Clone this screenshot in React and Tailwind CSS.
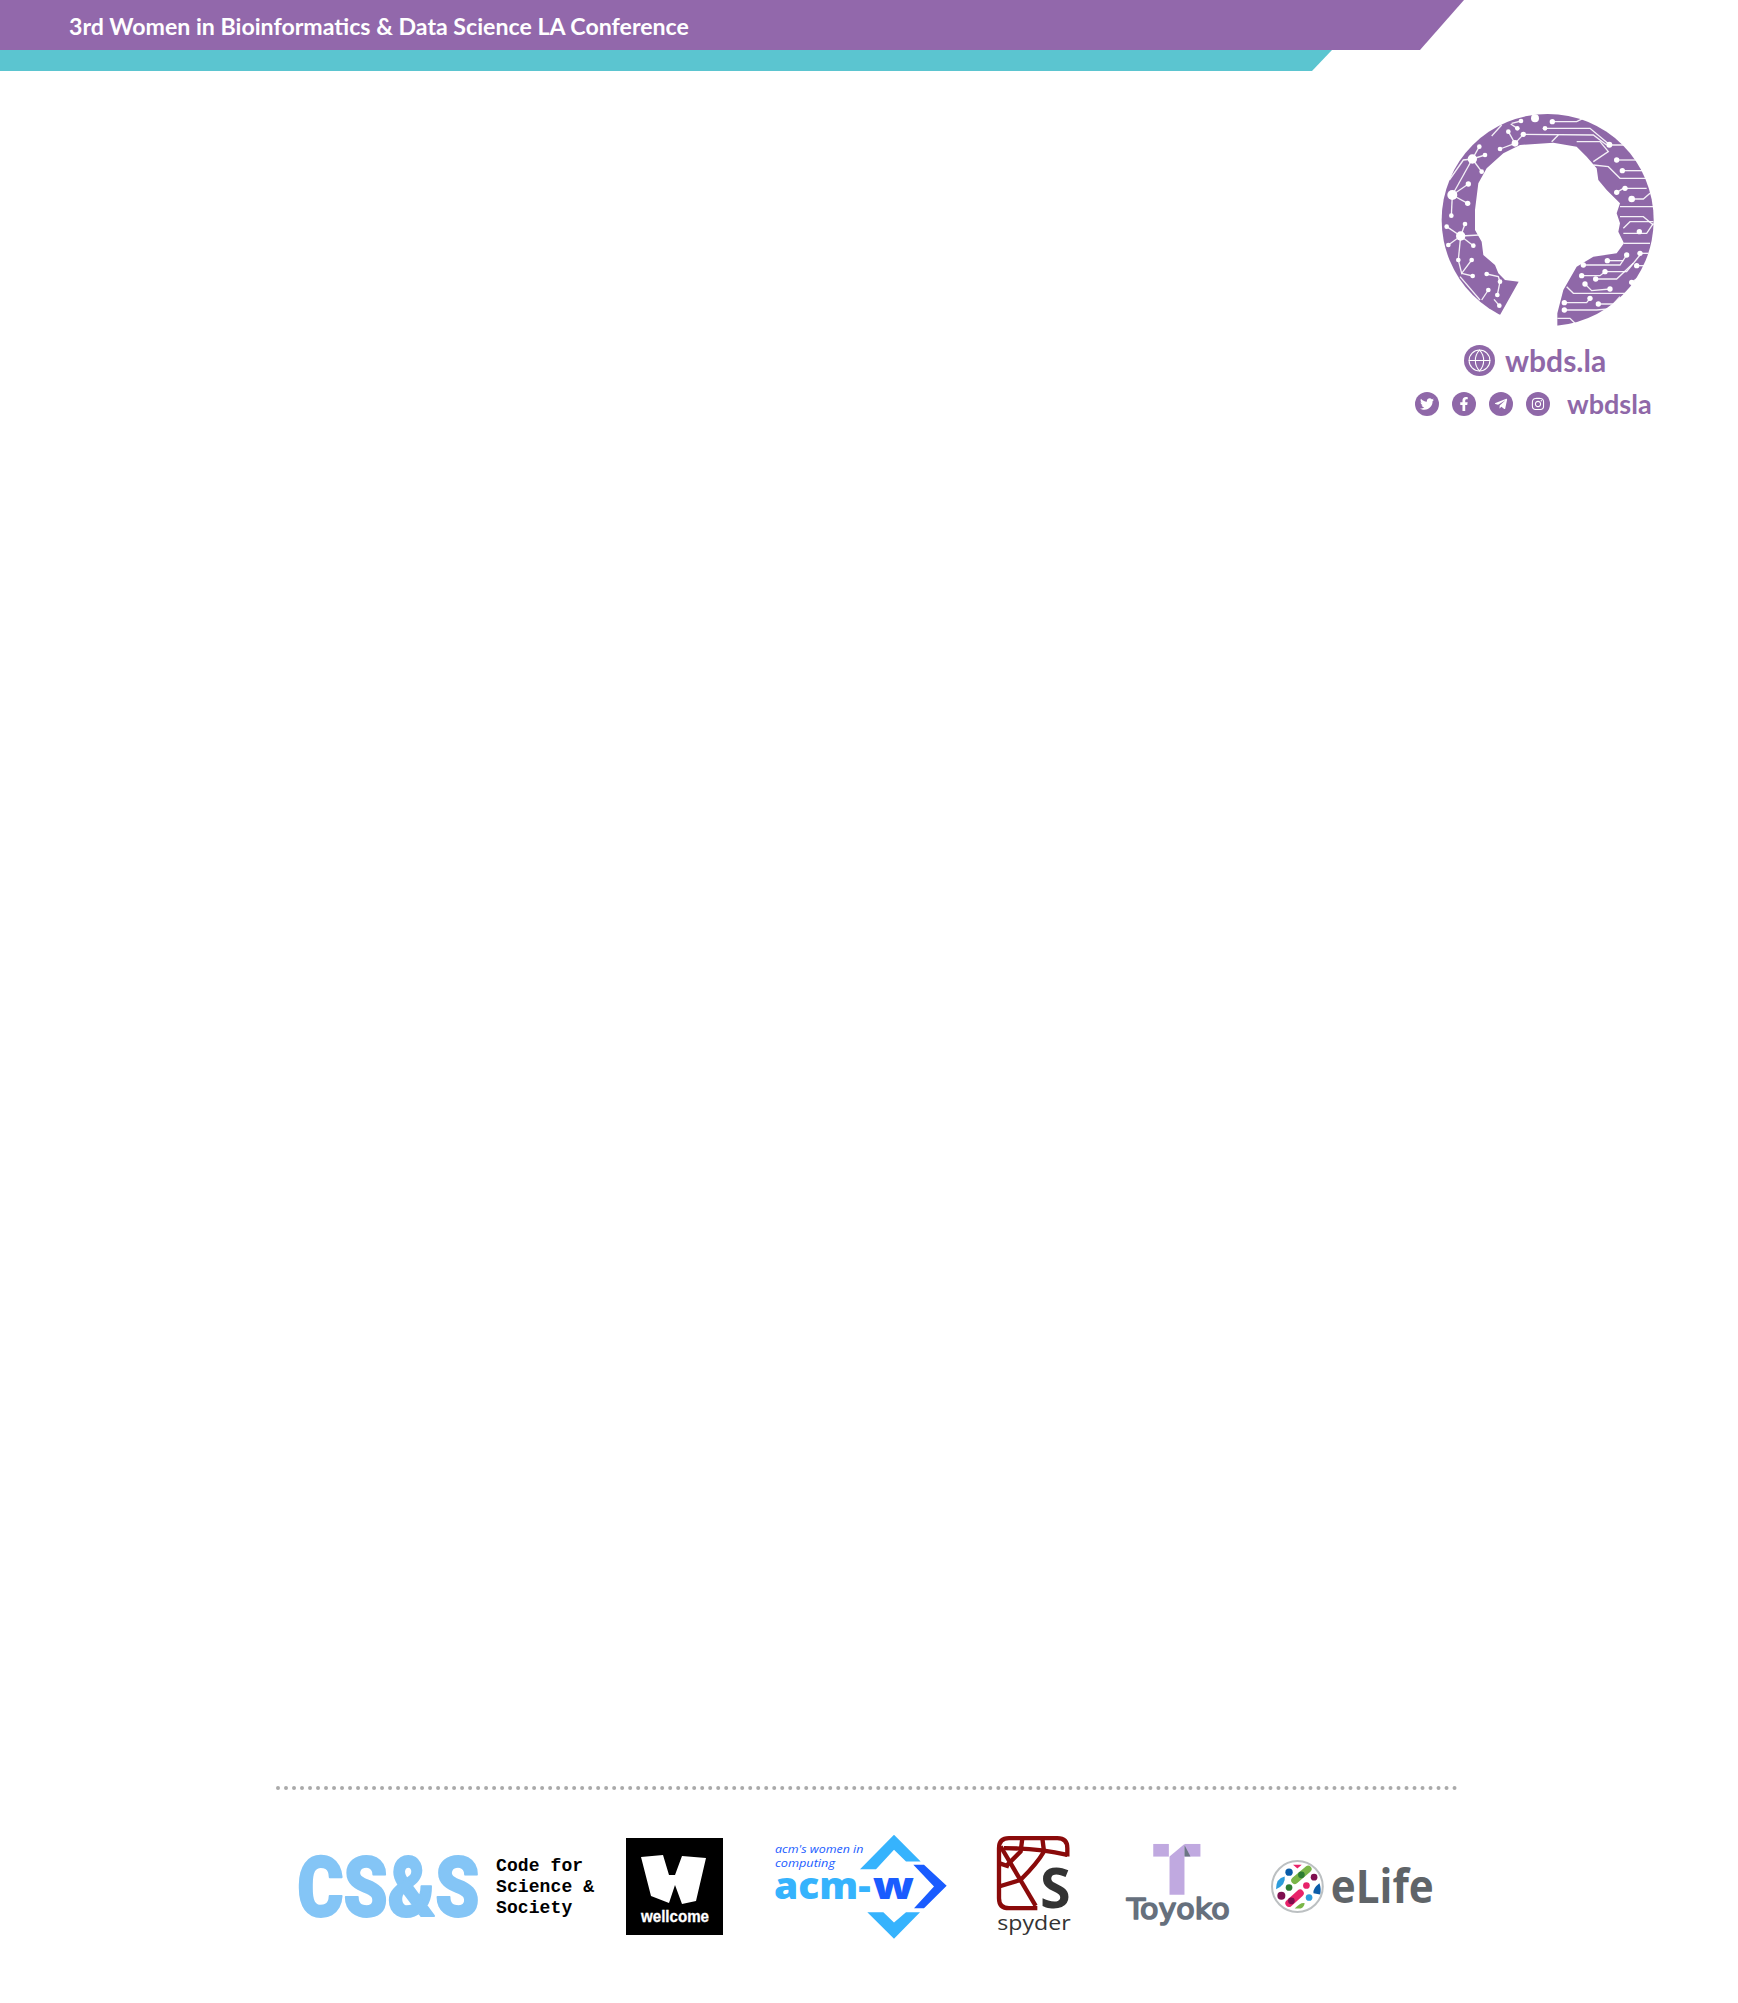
import { Globe } from 'lucide-react';
import { FaTwitter, FaFacebookF, FaTelegramPlane, FaInstagram } from 'react-icons/fa';

const circuits = [
  // left side, neural network
  [[157, 177], [178, 140]], [[157, 177], [195, 165]], [[157, 177], [185, 215]], [[157, 177], [130, 180], [88, 240]],
  [[157, 177], [97, 285]], [[97, 285], [145, 252]], [[97, 285], [143, 310]], [[97, 285], [94, 347]],
  [[122, 408], [80, 380]], [[122, 408], [135, 372]], [[122, 408], [85, 435]], [[122, 408], [160, 437]],
  [[122, 408], [115, 480]], [[122, 408], [178, 405]], [[115, 480], [125, 520], [155, 480]], [[125, 520], [158, 528]],
  [[200, 522], [235, 530], [240, 545], [232, 585]], [[205, 570], [185, 600]], [[238, 617], [222, 598]], [[120, 530], [180, 600]],
  // top
  [[265, 95], [285, 130], [240, 147]], [[310, 103], [285, 130]], [[303, 63], [275, 70]], [[292, 85], [272, 72]], [[215, 108], [245, 75]],
  // right side, circuit board
  [[397, 65], [470, 65], [500, 50]], [[375, 85], [510, 85], [570, 135], [640, 135]], [[310, 103], [520, 105], [560, 135]],
  [[395, 125], [415, 105]], [[470, 125], [540, 125], [565, 155], [520, 185]], [[590, 180], [660, 180]],
  [[607, 212], [670, 212]], [[520, 195], [565, 200], [600, 235], [690, 235]], [[590, 277], [610, 265], [680, 265]],
  [[635, 297], [670, 297], [690, 280]], [[600, 320], [700, 320]], [[600, 350], [670, 350], [700, 375]],
  [[610, 385], [630, 365], [700, 365]], [[610, 400], [680, 400], [700, 370]], [[612, 430], [690, 430]],
  [[490, 495], [600, 495], [620, 465]], [[562, 482], [610, 482]], [[660, 460], [685, 460]], [[650, 497], [680, 497]],
  [[485, 527], [540, 527], [555, 515], [620, 515], [660, 465]], [[527, 537], [590, 537], [640, 490]],
  [[495, 552], [515, 572], [570, 567]], [[635, 547], [660, 530]], [[440, 560], [460, 580], [620, 580]],
  [[433, 608], [500, 608], [510, 595]], [[535, 612], [580, 612], [600, 590]], [[433, 630], [530, 630], [580, 625]],
  [[412, 655], [450, 655], [465, 670]],
];

const dots = [
  [178, 140, 7], [195, 165, 7], [185, 215, 7], [145, 252, 8], [143, 310, 8], [94, 347, 7], [80, 380, 7], [135, 372, 7],
  [85, 435, 7], [160, 437, 7], [115, 480, 7], [155, 480, 7], [158, 528, 7], [200, 522, 7], [240, 545, 7], [232, 585, 7],
  [205, 570, 7], [238, 617, 7], [265, 95, 7], [240, 147, 7], [310, 103, 8], [285, 130, 10], [303, 63, 7], [292, 85, 7],
  [345, 55, 12], [397, 65, 8], [375, 85, 7], [568, 134, 9], [590, 180, 8], [607, 212, 8], [590, 277, 8], [615, 265, 8],
  [635, 297, 10], [658, 395, 8], [490, 495, 8], [562, 482, 8], [620, 465, 8], [660, 460, 8], [650, 497, 8], [485, 527, 8],
  [527, 537, 8], [555, 515, 8], [495, 552, 8], [570, 567, 8], [635, 547, 8], [433, 608, 8], [510, 595, 8], [535, 612, 8],
  [433, 630, 8],
];

function HeadLogo() {
  return (
    <svg viewBox="0 0 750 720" className="w-[250px] h-[240px] self-end">
      <circle cx="383" cy="360" r="318" fill="#8f68a8" />
      <path
        d="M240 645 L296 545 L255 540 L235 520 L225 495 L190 465 L185 425 L165 390 L165 330 L175 250 L200 205 L250 160 L300 135 L400 128 L470 140 L500 170 L530 205 L535 240 L560 270 L600 310 L590 340 L600 370 L595 395 L612 430 L590 460 L520 470 L470 500 L430 570 L412 640 L412 690 L240 690 Z"
        fill="#fff"
      />
      {circuits.map((pts, i) => (
        <polyline key={i} points={pts.map((p) => p.join(',')).join(' ')} fill="none" stroke="#fff" strokeWidth="4" opacity="0.9" />
      ))}
      {dots.map(([x, y, r], i) => (
        <circle key={i} cx={x} cy={y} r={r} fill="#fff" />
      ))}
      <circle cx="157" cy="177" r="14" fill="#fff" />
      <circle cx="97" cy="285" r="15" fill="#fff" />
      <circle cx="122" cy="408" r="14" fill="#fff" />
    </svg>
  );
}

function SocialIcon({ children, className = '' }) {
  return (
    <span className={`flex items-center justify-center w-6 h-6 rounded-full bg-[#8f68a8] text-white text-[14px] ${className}`}>
      {children}
    </span>
  );
}

function WellcomeLogo() {
  return (
    <div className="relative w-[97px] h-[97px] bg-black shrink-0 ml-[26px]">
      <svg viewBox="0 0 97 97" className="w-full h-full overflow-visible">
        <path d="M15 19 L37 17 L43 37 L49 37 L56 18 L80 20 L70 63 L56 66 L49 47 L43 65 L25 58 Z" fill="#fff" />
        <text x="15" y="84" fill="#fff" stroke="#fff" strokeWidth="0.3" fontFamily="Liberation Sans, sans-serif" fontWeight="700" fontSize="16" textLength="68" lengthAdjust="spacingAndGlyphs">wellcome</text>
      </svg>
    </div>
  );
}

function AcmLogo() {
  return (
    <svg viewBox="60 40 540 320" className="w-[180px] h-[107px] shrink-0 ml-[47px] overflow-visible">
      <path d="M432 45 L512 125 L468 125 L432 90 L378 148 L330 148 Z" fill="#36b3fd" />
      <path d="M352 277 L400 277 L432 308 L468 277 L510 277 L432 357 Z" fill="#36b3fd" />
      <path d="M490 135 L522 135 L590 198 L522 265 L492 265 L552 200 Z" fill="#1a5cff" />
      <text x="75" y="101" fill="#1a5cff" fontFamily="Open Sans, sans-serif" fontStyle="italic" fontSize="31" textLength="265" lengthAdjust="spacingAndGlyphs">acm's women in</text>
      <text x="75" y="143" fill="#1a5cff" fontFamily="Open Sans, sans-serif" fontStyle="italic" fontSize="31" textLength="180" lengthAdjust="spacingAndGlyphs">computing</text>
      <text x="72" y="238" fill="#36b3fd" fontFamily="Open Sans, sans-serif" fontWeight="800" fontSize="112" textLength="290" lengthAdjust="spacingAndGlyphs">acm-</text>
      <text x="368" y="238" fill="#1a5cff" fontFamily="Open Sans, sans-serif" fontWeight="800" fontSize="112" textLength="124" lengthAdjust="spacingAndGlyphs">w</text>
    </svg>
  );
}

function SpyderLogo() {
  return (
    <svg viewBox="730 40 240 320" className="w-[80px] h-[107px] shrink-0 ml-[44px] overflow-visible">
      <g fill="none" stroke="#8a0a0a" strokeWidth="13" strokeLinejoin="round">
        <path d="M950 110 L950 85 Q950 55 920 55 L775 55 Q745 55 745 85 L745 235 Q745 265 775 265 L860 265" />
        <path d="M750 80 L855 258" />
        <path d="M760 85 Q860 85 950 105" />
        <path d="M815 55 L810 95 L765 140" />
        <path d="M875 55 L880 95" />
        <path d="M880 95 Q860 130 810 180 L745 200" />
        <path d="M745 130 L775 140" />
      </g>
      <text x="868" y="265" fill="#333" fontFamily="Open Sans, sans-serif" fontWeight="700" fontSize="168" textLength="92" lengthAdjust="spacingAndGlyphs">S</text>
      <text x="740" y="332" fill="#333" fontFamily="Open Sans, sans-serif" fontWeight="400" fontSize="62" textLength="220" lengthAdjust="spacingAndGlyphs">spyder</text>
    </svg>
  );
}

function ToyokoLogo() {
  return (
    <svg viewBox="100 40 325 320" className="w-[108px] h-[107px] shrink-0 ml-[50px] overflow-visible">
      <path d="M188 72 L235 72 L235 110 L188 110 Z" fill="#c0a9e0" />
      <path d="M282 72 L330 72 L330 110 L282 110 Z" fill="#c0a9e0" />
      <path d="M237 225 L282 225 L282 72 L237 110 Z" fill="#c0a9e0" />
      <path d="M282 75 L300 110 L282 110 Z" fill="#6b7684" />
      <text x="108" y="297" fill="#66707d" stroke="#66707d" strokeWidth="5" strokeLinejoin="round" fontFamily="DejaVu Sans, sans-serif" fontSize="86" textLength="310" lengthAdjust="spacingAndGlyphs">Toyoko</text>
    </svg>
  );
}

function ElifeLogo() {
  return (
    <svg viewBox="535 40 500 320" className="w-[167px] h-[107px] shrink-0 ml-[37px] overflow-visible">
      <circle cx="620" cy="200" r="76" fill="#fff" stroke="#bcc0c2" strokeWidth="6" />
      <path d="M607 135 L633 135 L620 146 Z" fill="#e8226a" />
      <circle cx="595" cy="157" r="11" fill="#0a5ca8" />
      <circle cx="670" cy="172" r="10" fill="#7f0f4f" />
      <circle cx="647" cy="197" r="10" fill="#e8226a" />
      <circle cx="595" cy="203" r="10" fill="#2e7d32" />
      <circle cx="655" cy="233" r="10" fill="#2d9cdb" />
      <circle cx="572" cy="228" r="12" fill="#7f0f4f" />
      <path d="M556 208 Q556 175 582 170 Q586 195 556 208 Z" fill="#2d9cdb" />
      <path d="M686 190 Q666 205 668 220 L688 224 Q692 205 686 190 Z" fill="#0a5ca8" />
      <path d="M612 182 L652 148" stroke="#7ab648" strokeWidth="21" strokeLinecap="round" />
      <circle cx="632" cy="165" r="10" fill="#2e7d32" />
      <circle cx="614" cy="180" r="9" fill="#7ab648" />
      <path d="M595 250 L628 220" stroke="#e8226a" strokeWidth="22" strokeLinecap="round" />
      <circle cx="602" cy="243" r="10" fill="#7f0f4f" />
      <path d="M612 266 Q630 246 642 250 Q640 262 630 266 Z" fill="#7ab648" />
      <text x="720" y="248" fill="#5f6468" fontFamily="Open Sans, sans-serif" fontWeight="700" fontSize="140" textLength="308" lengthAdjust="spacingAndGlyphs">eLife</text>
    </svg>
  );
}

export default function App() {
  return (
    <div className="min-h-[2003px] flex flex-col bg-white font-['Lato',sans-serif]">
      <header>
        <div className="h-[50px] w-[1464px] bg-[#9268ab] flex items-center pl-[69px] pt-[3px] [clip-path:polygon(0_0,100%_0,1420px_100%,0_100%)]">
          <h1 className="text-[23.15px] font-bold text-white leading-none">3rd Women in Bioinformatics &amp; Data Science LA Conference</h1>
        </div>
        <div className="h-[21px] w-[1332px] bg-[#5bc5d0] [clip-path:polygon(0_0,100%_0,1312px_100%,0_100%)]" />
      </header>

      <main className="flex-1 flex justify-end pr-[68px] pt-[29px]">
        <div className="w-[256px] flex flex-col">
          <HeadLogo />
          <div className="flex items-center gap-[10px] pl-[50px] mt-[5px] text-[#8f68a8]">
            <span className="flex items-center justify-center w-[31px] h-[31px] rounded-full bg-[#8f68a8] text-white">
              <Globe size={25} strokeWidth={1} />
            </span>
            <span className="text-[30px] font-bold leading-[31px]">wbds.la</span>
          </div>
          <div className="flex items-center mt-[16px] ml-[1px] text-[#8f68a8]">
            <SocialIcon><FaTwitter /></SocialIcon>
            <SocialIcon className="ml-[13px]"><FaFacebookF /></SocialIcon>
            <SocialIcon className="ml-[13px]"><FaTelegramPlane /></SocialIcon>
            <SocialIcon className="ml-[13px]"><FaInstagram /></SocialIcon>
            <span className="ml-[17px] text-[27px] font-bold leading-6">wbdsla</span>
          </div>
        </div>
      </main>

      <footer className="pl-[276px] pb-[63px]">
        <div className="w-[1182px] border-t-4 border-dotted border-[#aaaaaa]" />
        <div className="flex items-center h-[107px] mt-[43px] pl-[22px]">
          <svg viewBox="85 190 545 320" className="w-[182px] h-[107px] shrink-0 overflow-visible">
            <text transform="translate(83 437) scale(0.845 1)" fill="#84c5f6" stroke="#84c5f6" strokeWidth="6" strokeLinejoin="round" fontFamily="Roboto, sans-serif" fontWeight="900" fontSize="250">CS&amp;S</text>
          </svg>
          <div className="ml-[16px] w-[104px] shrink-0 pt-[2px] font-['Liberation_Mono',monospace] font-bold text-[18px] tracking-[0.1px] leading-[21px] text-black">
            <p>Code for</p>
            <p className="whitespace-nowrap">Science &amp;</p>
            <p>Society</p>
          </div>
          <WellcomeLogo />
          <AcmLogo />
          <SpyderLogo />
          <ToyokoLogo />
          <ElifeLogo />
        </div>
      </footer>
    </div>
  );
}
